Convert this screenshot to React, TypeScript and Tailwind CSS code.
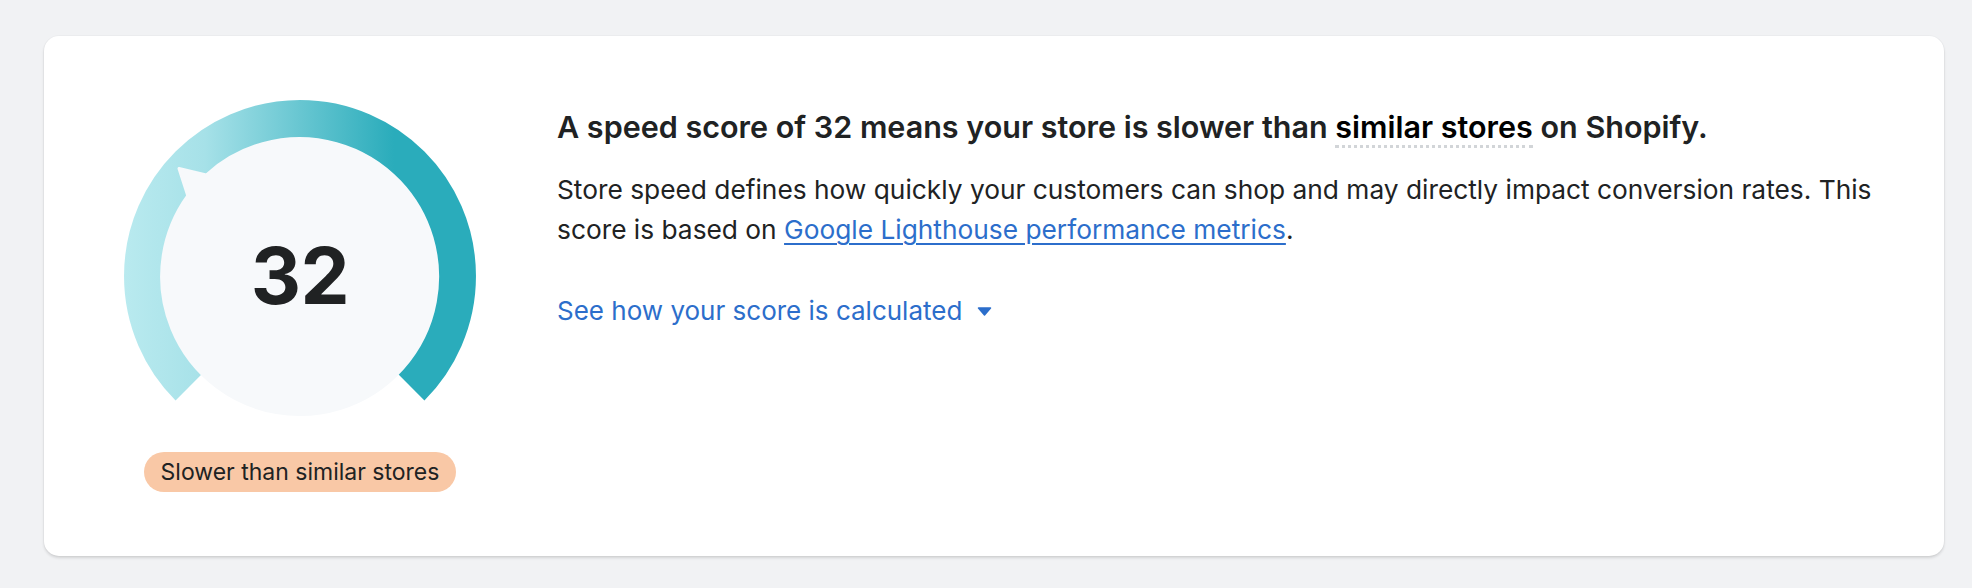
import React from "react";

function Gauge() {
  return (
    <div className="relative w-[352px] h-[352px]">
      <svg width="352" height="352" viewBox="0 0 352 352" className="block">
        <defs>
          <linearGradient id="arcGrad" gradientUnits="userSpaceOnUse" x1="0" y1="0" x2="270" y2="0">
            <stop offset="0" stopColor="#b9eaef" />
            <stop offset="0.3" stopColor="#a6e1e8" />
            <stop offset="1" stopColor="#2aacbb" />
          </linearGradient>
        </defs>
        <path
          d="M 65 287 A 157 157 0 1 1 287 287"
          fill="none"
          stroke="url(#arcGrad)"
          strokeWidth="38"
        />
        <path
          d="M 82.2 75 L 55 68.5 L 63.8 95.7 A 138 138 0 1 0 82.2 75 Z"
          fill="#f7f9fb"
          stroke="#f7f9fb"
          strokeWidth="3"
          strokeLinejoin="round"
        />
      </svg>
      <div className="absolute inset-0 flex items-center justify-center">
        <span className="text-[78px] leading-none font-bold text-[#202223] tracking-[-0.5px]">32</span>
      </div>
    </div>
  );
}

export default function App() {
  return (
    <div
      className="min-h-screen h-[588px] bg-[#f1f2f4] pt-[36px]"
      style={{ fontFamily: "Inter, 'Noto Sans', sans-serif" }}
    >
      <div className="ml-[44px] w-[1900px] h-[520px] bg-white rounded-[15px] shadow-[0_2px_3px_rgba(0,0,0,0.13),0_0_0_1px_rgba(0,0,0,0.02)] flex pl-[80px] pt-[64px] pr-[40px]">
        <div className="w-[352px] flex flex-col items-center shrink-0">
          <Gauge />
          <div className="h-[40px] px-[17px] rounded-full bg-[#f9c8a6] flex items-center text-[23px] text-[#202223] whitespace-nowrap">
            Slower than similar stores
          </div>
        </div>
        <div className="ml-[81px] pt-[9px] flex-1 text-[#202223]">
          <h2 className="text-[30.5px] leading-[36px] font-semibold whitespace-nowrap">
            A speed score of 32 means your store is slower than{" "}
            <span className="text-black border-b-[3px] border-dotted border-[#d2d5d8]">similar stores</span>{" "}
            on Shopify.
          </h2>
          <p className="mt-[25px] text-[26.3px] leading-[40px]">
            Store speed defines how quickly your customers can shop and may directly impact conversion rates. This
            score is based on{" "}
            <a href="#" className="text-[#2c6ecb] underline underline-offset-[4px] decoration-[2px]">
              Google Lighthouse performance metrics
            </a>
            .
          </p>
          <button className="mt-[41px] flex items-center gap-[15px] text-[26px] leading-[40px] text-[#2c6ecb]">
            <span>See how your score is calculated</span>
            <svg width="15" height="9" viewBox="0 0 15 9">
              <path d="M1.5 1 H13.5 L7.5 8 Z" fill="#2c6ecb" stroke="#2c6ecb" strokeWidth="1.5" strokeLinejoin="round" />
            </svg>
          </button>
        </div>
      </div>
    </div>
  );
}
